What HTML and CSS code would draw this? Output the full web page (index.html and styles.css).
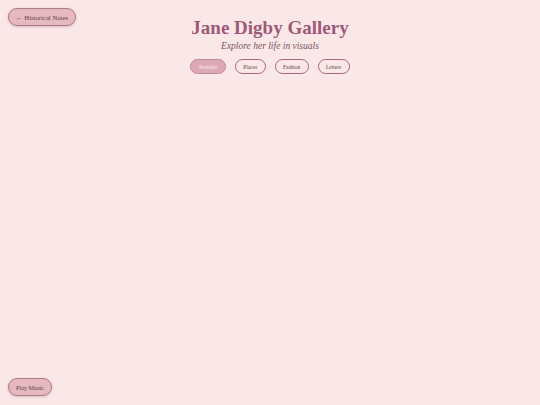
FILE: index.html
```html
<!DOCTYPE html>
<html lang="en">

<head>
    <meta charset="UTF-8">
    <title>Jane Digby Gallery</title>

    <link rel="stylesheet" href="styles.css">
</head>

<body>

    <button class="tilbage">&larr; Historical Notes</button>

    <header class="banner">
        <h1>Jane Digby Gallery</h1>
        <p class="undertekst">Explore her life in visuals</p>
    </header>

    <div id="knapper">
        <button class="filter valgt">Portraits</button>
        <button class="filter">Places</button>
        <button class="filter">Fashion</button>
        <button class="filter">Letters</button>
    </div>

    <section class="galleri"></section>

    <button class="musik">Play Music</button>

</body>

</html>
```

FILE: styles.css
```css
body {
    margin: 0;
    height: 405px;
    background-color: #fae8e8;
    font-family: "Liberation Serif", serif;
    color: #5a3a46;
    position: relative;
}

button {
    font-family: "Liberation Serif", serif;
    cursor: pointer;
}

.tilbage {
    position: absolute;
    left: 8px;
    top: 8px;
    height: 18px;
    padding: 0 7px;
    font-size: 6.7px;
    color: #5a3a46;
    background-color: #e6b9c0;
    border: 1px solid #b07a8a;
    border-radius: 10px;
    box-shadow: 0 1px 3px rgba(120, 60, 80, 0.25);
}

.banner {
    display: flex;
    flex-direction: column;
    align-items: center;
    padding-top: 17px;
}

.banner h1 {
    margin: 0;
    font-size: 19px;
    line-height: 22px;
    color: #a05877;
}

.undertekst {
    margin: 1px 0 0;
    font-style: italic;
    font-size: 9.5px;
    line-height: 12px;
    color: #7a5062;
}

#knapper {
    display: flex;
    justify-content: center;
    gap: 9px;
    margin-top: 7px;
}

#knapper button {
    height: 15px;
    padding: 0 7.5px;
    font-size: 5.4px;
    color: #5a3a46;
    background-color: transparent;
    border: 1px solid #a86478;
    border-radius: 8px;
}

#knapper button.valgt {
    background-color: #dca9b4;
    border-color: #c48898;
    color: #fbeef0;
}

.musik {
    position: absolute;
    left: 8px;
    bottom: 9px;
    height: 18px;
    padding: 0 7px;
    font-size: 6.2px;
    color: #5a3a46;
    background-color: #e6b9c0;
    border: 1px solid #b07a8a;
    border-radius: 10px;
    box-shadow: 0 1px 3px rgba(120, 60, 80, 0.25);
}
```
